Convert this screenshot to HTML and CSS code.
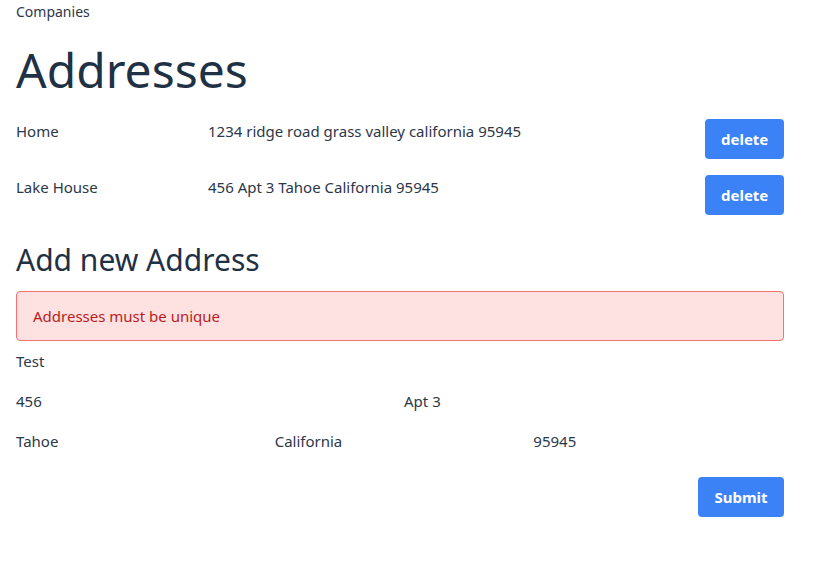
FILE: index.html
```html
<!DOCTYPE html>
<html>
<head>
<meta charset="utf-8">
<link rel="stylesheet" href="styles.css">
</head>
<body>
<div class="page">
  <div class="crumb">Companies</div>
  <h1 class="title">Addresses</h1>
  <div class="list">
    <div class="row">
      <div class="name">Home</div>
      <div class="addr">1234 ridge road grass valley california 95945</div>
      <button class="btn">delete</button>
    </div>
    <div class="row">
      <div class="name">Lake House</div>
      <div class="addr">456 Apt 3 Tahoe California 95945</div>
      <button class="btn">delete</button>
    </div>
  </div>
  <h2 class="subtitle">Add new Address</h2>
  <div class="alert">Addresses must be unique</div>
  <div class="form">
    <div class="field">Test</div>
    <div class="grid2">
      <div class="field">456</div>
      <div class="field">Apt 3</div>
    </div>
    <div class="grid3">
      <div class="field">Tahoe</div>
      <div class="field">California</div>
      <div class="field">95945</div>
    </div>
    <div class="actions">
      <button class="btn btn-submit">Submit</button>
    </div>
  </div>
</div>
</body>
</html>
```

FILE: styles.css
```css
html, body {
  margin: 0;
  padding: 0;
  background: #ffffff;
}
body {
  font-family: "Noto Sans", "Open Sans", sans-serif;
  color: #2d3748;
  font-size: 15px;
  line-height: 24px;
}
.page {
  width: 768px;
  padding-left: 16px;
}
.crumb {
  font-size: 14px;
  line-height: 24px;
  color: #2d3748;
}
.title {
  margin: 22px 0 25px;
  font-size: 48px;
  line-height: 48px;
  font-weight: 400;
  color: #1f3145;
}
.list {
  display: flex;
  flex-direction: column;
  gap: 16px;
}
.row {
  display: flex;
  align-items: flex-start;
}
.name {
  width: 192px;
  flex: none;
}
.addr {
  flex: 1;
}
.btn {
  flex: none;
  border: none;
  border-radius: 4px;
  background: #3b82f6;
  color: #ffffff;
  font-family: inherit;
  font-weight: 700;
  font-size: 15px;
  line-height: 24px;
  padding: 8px 16px;
  height: 40px;
  width: 79px;
}
.subtitle {
  margin: 27px 0 13px;
  font-size: 30px;
  line-height: 36px;
  font-weight: 400;
  color: #1f3145;
}
.alert {
  border: 1px solid #f87171;
  border-radius: 4px;
  background: #fee2e2;
  color: #b91c1c;
  padding: 12px 16px 12px;
}
.form {
  display: flex;
  flex-direction: column;
  gap: 16px;
  margin-top: 8px;
}
.grid2 {
  display: grid;
  grid-template-columns: 1fr 1fr;
  gap: 8px;
}
.grid3 {
  display: grid;
  grid-template-columns: 1fr 1fr 1fr;
  gap: 8px;
}
.actions {
  display: flex;
  justify-content: flex-end;
  margin-top: 8px;
}
.btn-submit {
  width: 86px;
}
```
